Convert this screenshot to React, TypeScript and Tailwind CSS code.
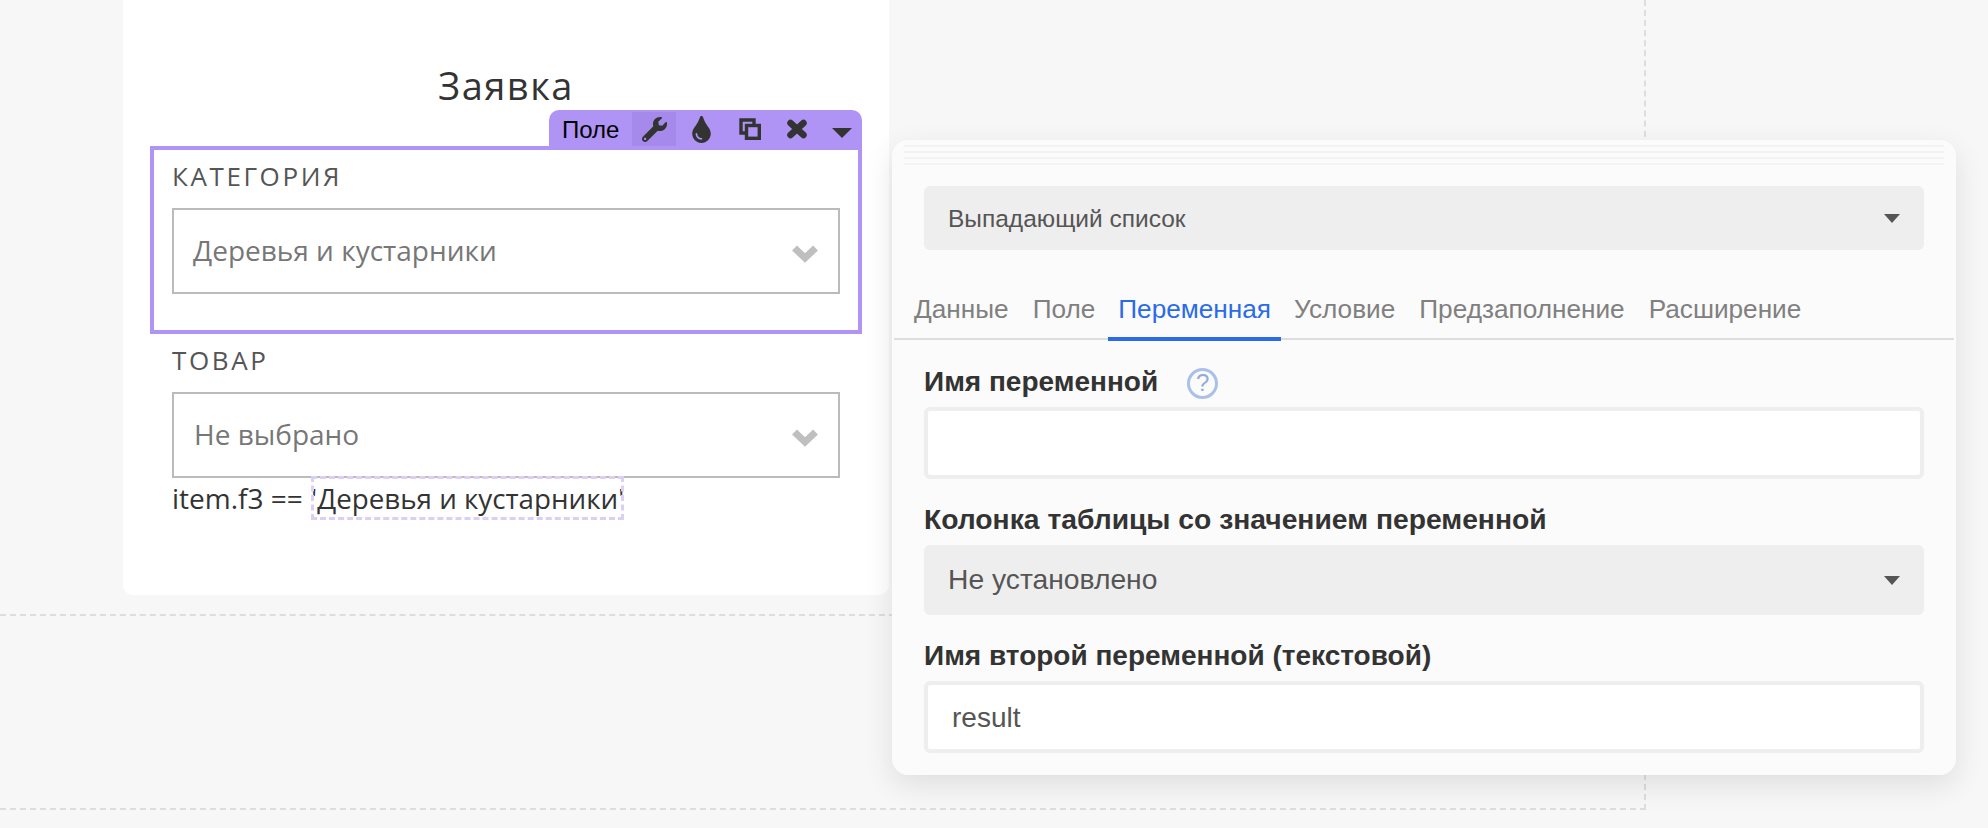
import { FaTint, FaWrench } from "react-icons/fa";

const tabs = ["Данные", "Поле", "Переменная", "Условие", "Предзаполнение", "Расширение"];

function CloneIcon() {
  return (
    <svg viewBox="0 0 22 22" className="ml-[2px] h-[22px] w-[22px]" fill="none" stroke="#333" strokeWidth="3.4">
      <path d="M15 7V2H2v13h5" />
      <rect x="7.5" y="7.5" width="12.8" height="12.8" />
    </svg>
  );
}

function CloseIcon() {
  return (
    <svg viewBox="0 0 22 20" className="h-[20px] w-[22px]" fill="none" stroke="#333" strokeWidth="6.5" strokeLinecap="round">
      <path d="M4.5 4l13 12M17.5 4l-13 12" />
    </svg>
  );
}

function Chevron() {
  return (
    <svg viewBox="0 0 26 18" className="mt-[5px] h-[18px] w-[26px]" fill="none" stroke="#bfbfbf" strokeWidth="7">
      <path d="M2.5 3l10.5 10L23.5 3" />
    </svg>
  );
}

function FormSelect({ value, textClass }: { value: string; textClass: string }) {
  return (
    <div className="flex h-[86px] items-center justify-between border-2 border-[#bbbbbb] bg-white pr-[20px]">
      <span className={`pb-[2px] text-[28px] text-[#777777] ${textClass}`}>{value}</span>
      <Chevron />
    </div>
  );
}

function GraySelect({ value, heightClass, textClass }: { value: string; heightClass: string; textClass: string }) {
  return (
    <div className={`flex items-center justify-between rounded-[6px] bg-[#eeeeee] pl-[24px] pr-[24px] ${heightClass}`}>
      <span className={`text-[#555555] ${textClass}`}>{value}</span>
      <span className="h-0 w-0 border-x-[8px] border-t-[9px] border-x-transparent border-t-[#555555]" />
    </div>
  );
}

export default function App() {
  return (
    <div className="relative h-[828px] w-[1988px] overflow-hidden bg-[#f7f7f7] font-['Liberation_Sans',sans-serif]">
      {/* Canvas with dashed guides */}
      <div className="h-[810px] w-[1646px] border-r-2 border-b-2 border-dashed border-[#dddddd]">
        <div className="h-[616px] border-b-2 border-dashed border-[#dddddd] pl-[123px]">
          {/* Form card */}
          <div className="h-[595px] w-[766px] rounded-b-[10px] bg-white pl-[27px] pr-[27px] pt-[60px] font-['Open_Sans',sans-serif]">
            <h1 className="h-[50px] text-center text-[38px] leading-[50px] tracking-[1.5px] text-[#333333]">Заявка</h1>

            {/* Selected field */}
            <div className="relative mt-[36px] h-[188px] border-4 border-[#b094f5] px-[18px] pt-[9px]">
              <div className="absolute -right-[4px] -top-[40px] flex h-[38px] w-[313px] items-start rounded-t-[10px] bg-[#b094f5] pl-[13px] pt-[2px] font-['Liberation_Sans',sans-serif]">
                <span className="w-[70px] text-[24px] leading-[36px] text-black">Поле</span>
                <span className="flex h-[34px] w-[44px] items-center justify-center bg-[#a58aec]">
                  <FaWrench className="h-[25px] w-[25px] text-[#333333]" />
                </span>
                <span className="flex h-[34px] w-[50px] items-center justify-center">
                  <FaTint className="h-[27px] w-[27px] text-[#333333]" />
                </span>
                <span className="flex h-[34px] w-[46px] items-center justify-center">
                  <CloneIcon />
                </span>
                <span className="flex h-[34px] w-[50px] items-center justify-center">
                  <CloseIcon />
                </span>
                <span className="ml-[10px] mt-[16px] h-0 w-0 border-x-[10px] border-t-[10px] border-x-transparent border-t-[#333333]" />
              </div>
              <div className="h-[34px] text-[26px] leading-[34px] tracking-[2.6px] text-[#555555]">КАТЕГОРИЯ</div>
              <div className="mt-[15px]">
                <FormSelect value="Деревья и кустарники" textClass="pl-[19px]" />
              </div>
            </div>

            {/* Second field */}
            <div className="px-[22px]">
              <div className="mt-[9px] h-[34px] text-[26px] leading-[34px] tracking-[2.6px] text-[#555555]">ТОВАР</div>
              <div className="mt-[15px]">
                <FormSelect value="Не выбрано" textClass="pl-[20px]" />
              </div>
              <div className="h-[42px] text-[28px] leading-[40px] text-[#333333]">
                item.f3 =={" "}
                <span className="-mt-[2px] ml-[1px] inline-block align-top text-[27.75px] leading-[44px] outline-3 -outline-offset-3 outline-dashed outline-[#dccff6]">'Деревья и кустарники'</span>
              </div>
            </div>
          </div>
        </div>
      </div>

      {/* Floating settings panel */}
      <div className="absolute left-[892px] top-[140px] h-[635px] w-[1064px] rounded-[16px] bg-[#fbfbfb] shadow-[0_10px_30px_rgba(0,0,0,0.1)]">
        <div className="mx-[12px] flex flex-col gap-[4px] pt-[5px]">
          <div className="h-[2px] bg-[#f3f3f3]" />
          <div className="h-[2px] bg-[#f3f3f3]" />
          <div className="h-[2px] bg-[#f3f3f3]" />
          <div className="h-[2px] bg-[#f3f3f3]" />
        </div>

        <div className="mx-[32px] mt-[21px]">
          <GraySelect value="Выпадающий список" heightClass="h-[64px]" textClass="text-[24.5px] pt-[2px]" />
        </div>

        <div className="mx-[2px] mt-[40px] flex h-[50px] items-start border-b-2 border-[#dddddd] pl-[8px]">
          {tabs.map((tab) => (
            <div
              key={tab}
              className={
                tab === "Переменная"
                  ? "mx-[1px] h-[51px] border-b-4 border-[#2b6be8] px-[10px] text-[26.2px] leading-[38px] text-[#2b6be8]"
                  : "px-[12px] text-[26.2px] leading-[38px] text-[#808080]"
              }
            >
              {tab}
            </div>
          ))}
        </div>

        <div className="px-[32px]">
          <div className="mt-[24px] flex h-[36px] items-center font-bold">
            <span className="text-[28px] text-[#333333]">Имя переменной</span>
            <span className="ml-[29px] mt-[2px] flex h-[31px] w-[31px] items-center justify-center rounded-full border-[3px] border-[#a8c0ea] text-[24px] font-normal text-[#8fabe0]">
              ?
            </span>
          </div>
          <div className="mt-[7px] h-[72px] rounded-[6px] border-4 border-[#eeeeee] bg-white" />

          <div className="mt-[23px] h-[36px] text-[28.25px] font-bold leading-[34px] text-[#333333]">Колонка таблицы со значением переменной</div>
          <div className="mt-[7px]">
            <GraySelect value="Не установлено" heightClass="h-[70px]" textClass="pb-[2px] text-[28.25px]" />
          </div>

          <div className="mt-[23px] h-[36px] text-[28px] font-bold leading-[36px] text-[#333333]">Имя второй переменной (текстовой)</div>
          <div className="mt-[7px] flex h-[72px] items-center rounded-[6px] border-4 border-[#eeeeee] bg-white pl-[24px] pt-[2px] text-[28px] text-[#555555]">
            result
          </div>
        </div>
      </div>
    </div>
  );
}
